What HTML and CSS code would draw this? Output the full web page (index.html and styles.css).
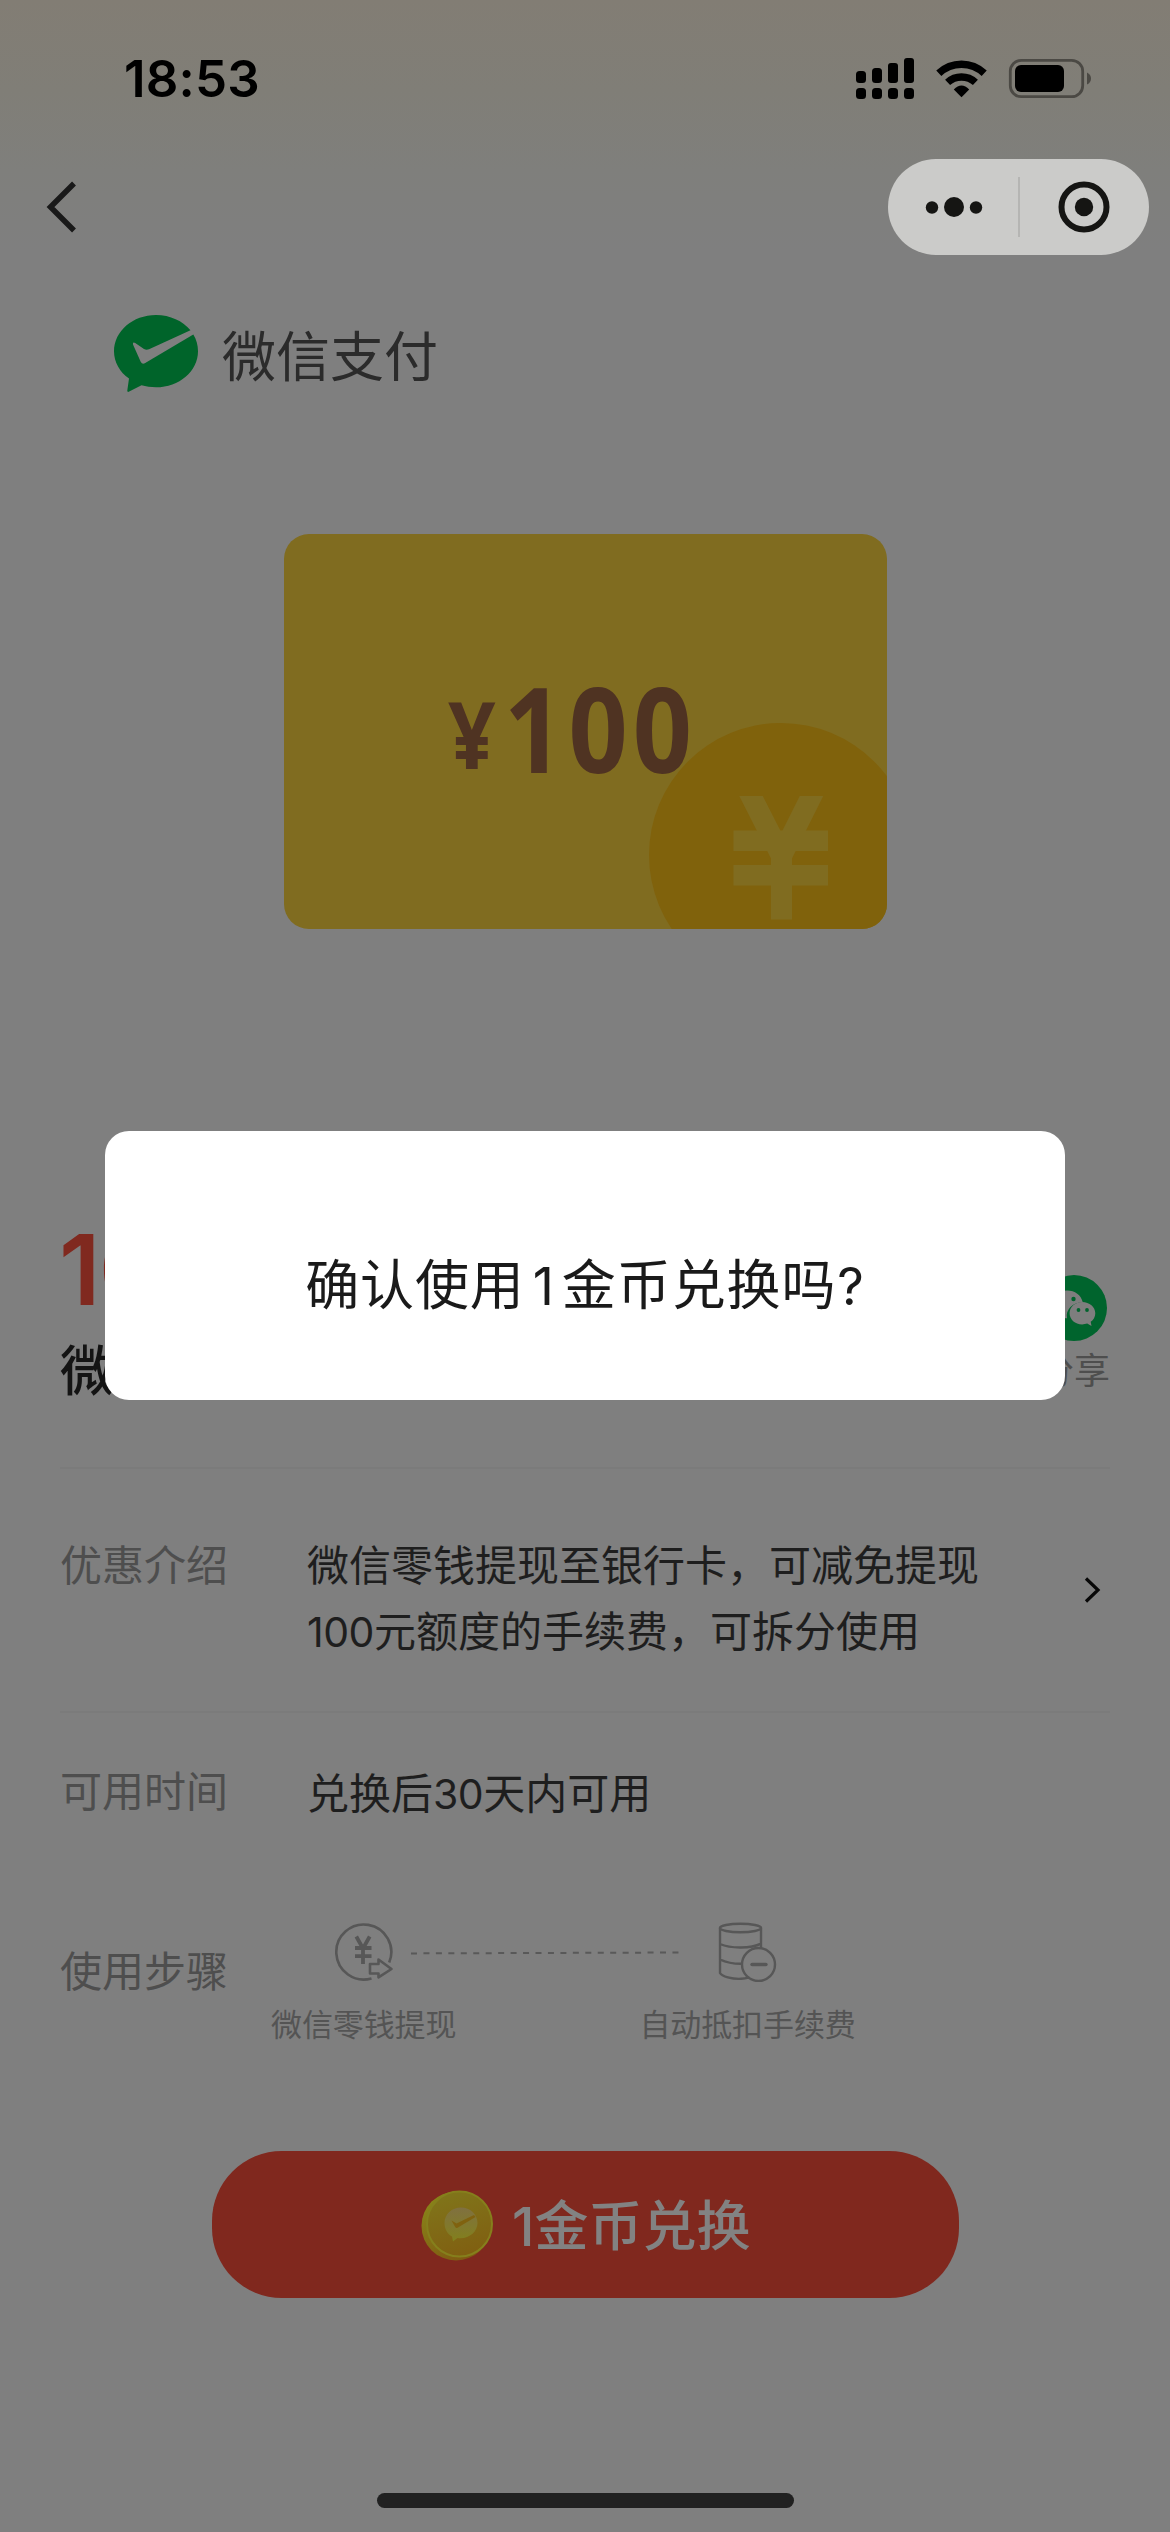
FILE: index.html
```
<!DOCTYPE html>
<html lang="zh-CN">
<head>
<meta charset="utf-8">
<title>微信支付</title>
<link rel="stylesheet" href="styles.css">
</head>
<body>
<div class="screen">
  <header class="status">
    <span class="clock">18:53</span>
    <svg class="status-icons" width="236" height="44" viewBox="856 56 236 44">
      <g>
        <rect x="856" y="70" width="10" height="12" rx="3.5"/><rect x="872" y="67" width="10" height="15" rx="3.5"/>
        <rect x="888" y="62" width="10" height="20" rx="3"/><rect x="904" y="57" width="10" height="25" rx="3"/>
        <rect x="856" y="87" width="10" height="11" rx="3.5"/><rect x="872" y="87" width="10" height="11" rx="3.5"/>
        <rect x="888" y="87" width="10" height="11" rx="3.5"/><rect x="904" y="87" width="10" height="11" rx="3.5"/>
      </g>
      <g fill="none" stroke="#000" stroke-width="7.4">
        <path d="M938.8 72.300A33 33 0 0 1 984.200 72.300"/>
        <path d="M947.600 81.400A20.500 20.500 0 0 1 975.400 81.400"/>
      </g>
      <path d="M961.500 96.200L953.800 88.500Q961.500 80.500 969.200 88.500Z"/>
      <rect x="1010.300" y="59.300" width="72.400" height="36.400" rx="11" fill="none" stroke="#4b4944" stroke-width="2.800"/>
      <rect x="1015" y="64" width="49" height="27" rx="6"/>
      <path d="M1087 71.500Q1091 73.500 1091 77.500T1087 83.500Z" fill="#4b4944"/>
    </svg>
  </header>

  <nav class="nav">
    <svg width="32" height="52" viewBox="0 0 32 52"><path d="M28 2.500L4.500 26L28 49.500" fill="none" stroke="#191919" stroke-width="5.500"/></svg>
    <div class="capsule">
      <svg width="58" height="24" viewBox="0 0 58 24" fill="#151513"><circle cx="7" cy="12.500" r="6.200"/><circle cx="29" cy="12" r="10"/><circle cx="51" cy="12.500" r="6.200"/></svg>
      <span class="capsule-line"></span>
      <svg width="52" height="52" viewBox="0 0 52 52"><circle cx="26" cy="26" r="22.500" fill="none" stroke="#151513" stroke-width="6"/><circle cx="26" cy="26" r="9.200" fill="#151513"/></svg>
    </div>
  </nav>

  <div class="brand">
    <svg width="84" height="78" viewBox="0 0 84 78">
      <path fill="#00642a" d="M42 0C18.800 0 0 16.200 0 36.200C0 47.200 5.800 57 15 63.600L13.300 75.500Q13.200 77.700 15.200 76.600L27.500 70.300C32 71.600 36.900 72.300 42 72.300C65.200 72.300 84 56.200 84 36.200C84 30.200 82.400 24.600 79.300 19.600L30.800 48.300Q28.200 49.600 26.700 46.800L19 29.500Q18.400 26.600 21.200 27.900L30 34Q32.200 35.400 35 34.300L76.500 15.300C68.800 6 56.200 0 42 0Z"/>
    </svg>
    <span>微信支付</span>
  </div>

  <div class="coupon">
    <svg class="coupon-disc" width="239" height="207" viewBox="0 0 239 207">
      <circle cx="132" cy="133" r="132" fill="#80620c"/>
      <g fill="none" stroke="#806c20">
        <path stroke-width="21" d="M99.500 69L132.500 134L165 69M132.500 125V197.500"/>
        <path stroke-width="20.500" d="M84.500 118.800H179M84.500 153.200H179"/>
      </g>
      <path fill="#80620c" d="M80 60H190V74H80Z"/>
    </svg>
    <span class="coupon-value"><small>¥</small><span>100</span></span>
  </div>

  <section class="offer">
    <div class="offer-name">
      <strong>100</strong>
      <span>微信支付</span>
    </div>
    <div class="share">
      <svg width="66" height="66" viewBox="0 0 66 66">
        <circle cx="33" cy="33" r="33" fill="#00642d"/>
        <path fill="#7e7e7e" d="M26 15.500C16 15.500 8 21.500 8 29.500C8 34 10.500 38 14.500 40.500L13 45.500L19 42.300Q22.500 43.300 26 43.200A16 13.500 0 0 1 41.800 27.200C40 20 34 15.500 26 15.500Z"/>
        <path fill="#7e7e7e" d="M41.200 27C34 27 28.600 32 28.600 38.200S34 49.400 41.200 49.400Q43.800 49.400 46.200 48.600L50.500 51L49.700 46.800C52.500 44.800 54.300 41.800 54.300 38.200C54.300 32 48.500 27 41.200 27Z"/>
        <g fill="#00642d"><circle cx="20" cy="24" r="2.200"/><circle cx="32.500" cy="24" r="2.200"/><circle cx="37.500" cy="35" r="1.900"/><circle cx="46" cy="35" r="1.900"/></g>
      </svg>
      <span>分享</span>
    </div>
  </section>

  <section class="row intro">
    <span class="label">优惠介绍</span>
    <p class="text">微信零钱提现至银行卡，可减免提现<br><b>100</b>元额度的手续费，可拆分使用</p>
    <svg class="more" width="20" height="30" viewBox="0 0 20 30"><path d="M3 3.500L15 15L3 26.500" fill="none" stroke="#080808" stroke-width="3.200"/></svg>
  </section>

  <section class="row period">
    <span class="label">可用时间</span>
    <p class="text">兑换后<b>30</b>天内可用</p>
  </section>

  <section class="steps">
    <span class="label">使用步骤</span>
    <div class="step">
      <svg width="60" height="60" viewBox="0 0 60 60" fill="none" stroke="#575757" stroke-width="2.600" stroke-linejoin="round">
        <path d="M37.500 56.400A27.500 27.500 0 1 1 55.200 40.500"/>
        <path stroke-width="3.800" d="M22.300 14.500L29 26.500L35.700 14.500M29 26.500V42M21 26H37.500M21 34.200H37.500"/>
        <path d="M36 42H44.500V37.500L57.500 47L44.500 55.300V51.500H36Z"/>
      </svg>
      <span>微信零钱提现</span>
    </div>
    <svg class="dashes" width="270" height="4" viewBox="0 0 270 4"><path d="M1 2.400L269 1.500" fill="none" stroke="#595959" stroke-width="2" stroke-dasharray="6 6.450"/></svg>
    <div class="step">
      <svg width="60" height="60" viewBox="0 0 60 60" fill="none" stroke="#575757" stroke-width="2.400" stroke-linecap="round">
        <ellipse cx="22.500" cy="6" rx="20.500" ry="4.200"/>
        <path d="M2 6V51C4 54.500 14 57.200 23 56.800Q27 56.600 30.500 55.600M43 6V25M2 22C13 26.800 33 26.600 43 21.600M2 37.500C9 40.800 15 41.800 23 41.800"/>
        <circle cx="40.500" cy="42.500" r="16.500"/><path d="M34 42.500H48" stroke-width="3.400"/>
      </svg>
      <span>自动抵扣手续费</span>
    </div>
  </section>

  <button class="redeem">
    <svg width="74" height="72" viewBox="0 0 74 72">
      <defs>
        <linearGradient id="rim" x1="0" y1="0" x2=".6" y2="1"><stop offset="0" stop-color="#8a8a1a"/><stop offset="1" stop-color="#7f5a12"/></linearGradient>
        <linearGradient id="face" x1=".3" y1="0" x2=".6" y2="1"><stop offset="0" stop-color="#80751a"/><stop offset="1" stop-color="#805f11"/></linearGradient>
        <linearGradient id="mark" x1="0" y1="0" x2="0" y2="1"><stop offset="0" stop-color="#807040"/><stop offset="1" stop-color="#82801c"/></linearGradient>
      </defs>
      <circle cx="36" cy="37" r="34.500" fill="url(#rim)"/>
      <circle cx="39.500" cy="35" r="32.500" fill="url(#face)" stroke="#857f1c" stroke-width="2"/>
      <path fill="url(#mark)" d="M41 18.500C31.800 18.500 24.500 25.300 24.500 34C24.500 40 27.500 45 32 47.500L33 52.500L37.500 49C48.500 50.500 57.500 43 57.500 34C57.500 25.300 50.200 18.500 41 18.500Z"/>
      <path fill="#80620f" d="M31.500 31.500L36.500 34.500L54 26L55.500 28L37.500 38.800Q36 39.500 35.200 38Z"/>
    </svg>
    <span><b>1</b>金币兑换</span>
  </button>

  <div class="home-bar"></div>

  <div class="dialog" role="dialog"><p>确认使用<b class="count">1</b>金币兑换吗<b class="mark">?</b></p></div>
</div>
</body>
</html>
```
FILE: styles.css
```
* { box-sizing: border-box; }

body {
  margin: 0;
  background: #7f7f7f;
  font-family: "Noto Sans CJK SC", sans-serif;
  color: #1e1e1e;
}

p { margin: 0; }

.screen {
  position: relative;
  display: flex;
  flex-direction: column;
  width: 1170px;
  height: 2532px;
  overflow: hidden;
  background: linear-gradient(#827d74 0, #807e77 90px, #7f7f7c 170px, #7f7f7f 250px);
}

.status {
  display: flex;
  justify-content: space-between;
  align-items: center;
  height: 157px;
  padding: 0 78px 0 124px;
}

.clock {
  font: 600 51px/60px Inter, sans-serif;
  letter-spacing: 0.2px;
  color: #000;
}

.nav {
  display: flex;
  justify-content: space-between;
  align-items: center;
  height: 100px;
  padding: 0 21px 0 46px;
}

.capsule {
  display: flex;
  align-items: center;
  width: 261px;
  height: 96px;
  padding-left: 37px;
  border-radius: 48px;
  background: #cbcbc9;
}

.capsule-line {
  width: 2px;
  height: 60px;
  margin: 0 38px 0 35px;
  background: #b5b5b3;
}

.brand {
  display: flex;
  align-items: center;
  gap: 24px;
  height: 194px;
  padding-left: 114px;
  font-size: 54px;
  font-weight: 400;
  line-height: 80px;
  color: #2b2b2b;
}

.coupon {
  position: relative;
  width: 603px;
  height: 395px;
  margin: 83px 0 0 284px;
  border-radius: 25px;
  background: #806c20;
  overflow: hidden;
}

.coupon-value {
  position: relative;
  display: flex;
  align-items: baseline;
  padding: 112px 0 0 164px;
  font: 700 119px/162px "Open Sans", sans-serif;
  color: #4f3322;
}

.coupon-value span,
.coupon-value small {
  transform: scaleX(0.87);
  transform-origin: 0 50%;
}

.coupon-value span { letter-spacing: 6px; }

.coupon-value small {
  width: 56px;
  margin-bottom: 4px;
  font-size: 94px;
  transform: translateY(-4px) scaleX(0.89);
}

.coupon-disc {
  position: absolute;
  left: 365px;
  top: 188px;
}

.offer {
  display: flex;
  justify-content: space-between;
  height: 540px;
  margin: 0 60px;
  padding-top: 291px;
  border-bottom: 2px solid #7b7b7b;
}

.offer-name {
  display: flex;
  flex-direction: column;
}

.offer-name strong {
  margin-left: -1px;
  font: 600 98px/100px Inter, sans-serif;
  letter-spacing: -1.5px;
  color: #80291f;
}

.offer-name span {
  font-size: 54px;
  font-weight: 500;
  line-height: 80px;
  margin-top: 8px;
  color: #141414;
}

.share {
  display: flex;
  flex-direction: column;
  align-items: center;
  padding-top: 55px;
  font-size: 36px;
  line-height: 54px;
  color: #4e4e4e;
}

.row {
  display: flex;
  margin: 0 60px;
  font-size: 42px;
  line-height: 66px;
}

.label {
  width: 247px;
  font-size: 42px;
  font-weight: 400;
  line-height: 66px;
  color: #4e4e4e;
}

.text {
  flex: 1;
  font-weight: 400;
}

.text b {
  font: 400 41px/1 Inter, sans-serif;
  letter-spacing: -0.5px;
}

.intro {
  height: 244px;
  padding-top: 61px;
  border-bottom: 2px solid #7b7b7b;
}

.more {
  margin: 45px 7px 0 0;
}

.period {
  height: 167px;
  padding-top: 43px;
}

.period .text { padding-top: 2px; }

.steps {
  display: flex;
  height: 180px;
  padding-left: 60px;
}

.steps .label {
  width: 211px;
  padding-top: 56px;
}

.step {
  display: flex;
  flex-direction: column;
  align-items: center;
  padding-top: 42px;
  font-size: 31px;
  line-height: 46px;
  letter-spacing: -0.1px;
  color: #545454;
}

.step span { margin-top: 18px; }

.dashes { margin: 71px -41px 0 -46px; }

.redeem {
  display: flex;
  align-items: center;
  align-self: flex-start;
  gap: 18px;
  width: 747px;
  height: 147px;
  margin: 91px 0 0 212px;
  padding: 0 0 0 208px;
  border: 0;
  border-radius: 70px;
  background: #80281e;
  font: 500 54px/80px "Noto Sans CJK SC", sans-serif;
  color: #828282;
}

.redeem span { margin-top: -4px; }

.redeem b {
  font: 500 54px/1 Inter, sans-serif;
}

.home-bar {
  width: 417px;
  height: 15px;
  margin: auto 0 24px 377px;
  border-radius: 8px;
  background: #212121;
}

.dialog {
  position: absolute;
  left: 105px;
  top: 1131px;
  display: flex;
  justify-content: center;
  width: 960px;
  height: 269px;
  padding-top: 111px;
  border-radius: 24px;
  background: #fff;
  font-size: 54px;
  line-height: 80px;
  letter-spacing: 0.9px;
  color: #1a1a1a;
}

.dialog b {
  font: 400 52px/1 Inter, sans-serif;
}

.dialog .count { margin: 0 7px 0 8px; }

.dialog .mark { margin-left: 1px; }
```
